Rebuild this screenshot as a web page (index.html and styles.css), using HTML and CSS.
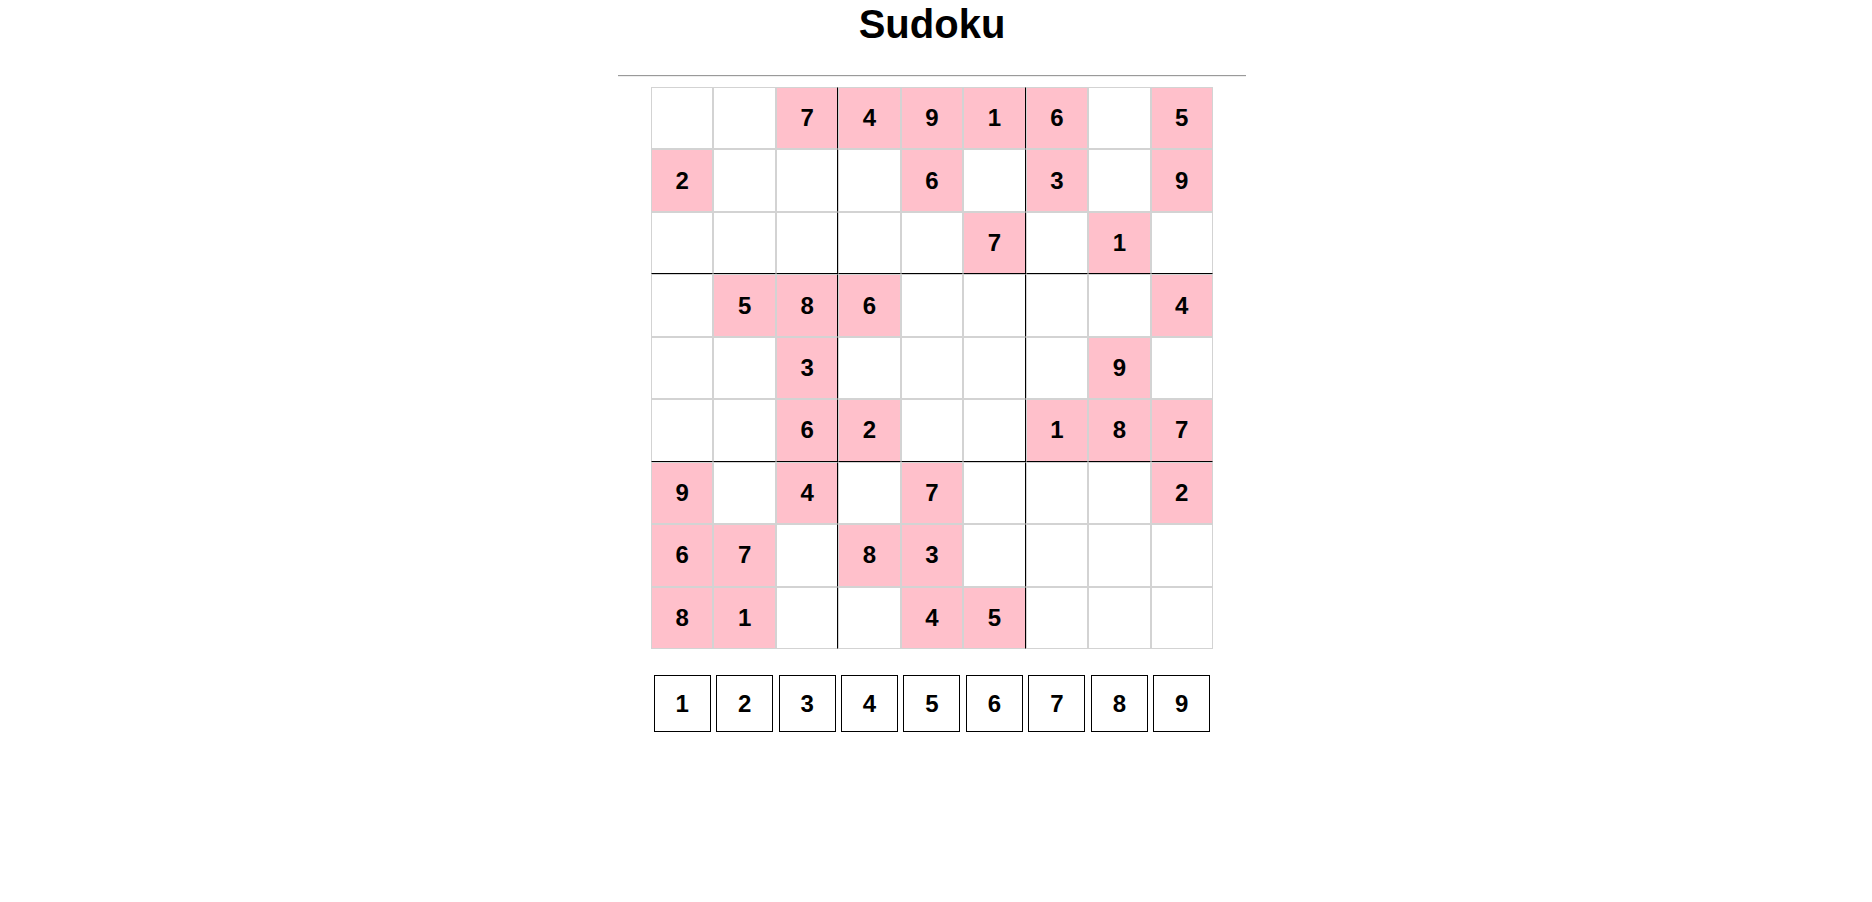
FILE: index.html
```html
<!DOCTYPE html>
<html lang="en">
<head>
<meta charset="utf-8">
<title>Sudoku</title>
<link rel="stylesheet" href="styles.css">
</head>
<body>
<main class="app">
  <h1 class="title">Sudoku</h1>
  <hr class="divider">
  <div class="board">
    <div class="cell"></div><div class="cell"></div><div class="cell given">7</div><div class="cell given">4</div><div class="cell given">9</div><div class="cell given">1</div><div class="cell given">6</div><div class="cell"></div><div class="cell given">5</div>
    <div class="cell given">2</div><div class="cell"></div><div class="cell"></div><div class="cell"></div><div class="cell given">6</div><div class="cell"></div><div class="cell given">3</div><div class="cell"></div><div class="cell given">9</div>
    <div class="cell"></div><div class="cell"></div><div class="cell"></div><div class="cell"></div><div class="cell"></div><div class="cell given">7</div><div class="cell"></div><div class="cell given">1</div><div class="cell"></div>
    <div class="cell"></div><div class="cell given">5</div><div class="cell given">8</div><div class="cell given">6</div><div class="cell"></div><div class="cell"></div><div class="cell"></div><div class="cell"></div><div class="cell given">4</div>
    <div class="cell"></div><div class="cell"></div><div class="cell given">3</div><div class="cell"></div><div class="cell"></div><div class="cell"></div><div class="cell"></div><div class="cell given">9</div><div class="cell"></div>
    <div class="cell"></div><div class="cell"></div><div class="cell given">6</div><div class="cell given">2</div><div class="cell"></div><div class="cell"></div><div class="cell given">1</div><div class="cell given">8</div><div class="cell given">7</div>
    <div class="cell given">9</div><div class="cell"></div><div class="cell given">4</div><div class="cell"></div><div class="cell given">7</div><div class="cell"></div><div class="cell"></div><div class="cell"></div><div class="cell given">2</div>
    <div class="cell given">6</div><div class="cell given">7</div><div class="cell"></div><div class="cell given">8</div><div class="cell given">3</div><div class="cell"></div><div class="cell"></div><div class="cell"></div><div class="cell"></div>
    <div class="cell given">8</div><div class="cell given">1</div><div class="cell"></div><div class="cell"></div><div class="cell given">4</div><div class="cell given">5</div><div class="cell"></div><div class="cell"></div><div class="cell"></div>
  </div>
  <div class="numbers">
    <button class="num">1</button><button class="num">2</button><button class="num">3</button><button class="num">4</button><button class="num">5</button><button class="num">6</button><button class="num">7</button><button class="num">8</button><button class="num">9</button>
  </div>
</main>
</body>
</html>
```
FILE: styles.css
```css
html, body {
  margin: 0;
  padding: 0;
  background: #fff;
}

body {
  padding-right: 8px;
  font-family: "Liberation Sans", Arial, sans-serif;
  color: #000;
}

.app {
  width: 628px;
  margin: 0 auto;
  display: flex;
  flex-direction: column;
  align-items: center;
}

.title {
  margin: 0;
  font-size: 40px;
  line-height: 48px;
  font-weight: bold;
  text-align: center;
}

.divider {
  align-self: stretch;
  margin: 27px 0 10px;
  height: 0;
  border: 0;
  border-top: 1px solid #9a9a9a;
  border-bottom: 1px solid #eeeeee;
}

.board {
  width: 562px;
  height: 562px;
  display: grid;
  grid-template-columns: repeat(9, 1fr);
  grid-template-rows: repeat(9, 1fr);
}

.cell {
  box-sizing: border-box;
  border: 1px solid #d3d3d3;
  background: #fff;
  display: flex;
  align-items: center;
  justify-content: center;
  font-size: 24px;
  font-weight: bold;
}

.cell.given {
  background: #ffc0cb;
}

.cell:nth-child(9n+3),
.cell:nth-child(9n+6) {
  border-right-color: #000;
}

.cell:nth-child(n+19):nth-child(-n+27),
.cell:nth-child(n+46):nth-child(-n+54) {
  border-bottom-color: #000;
}

.numbers {
  width: 562px;
  margin-top: 26px;
  display: grid;
  grid-template-columns: repeat(9, 1fr);
  justify-items: center;
}

.num {
  box-sizing: border-box;
  width: 57px;
  height: 57px;
  padding: 0;
  margin: 0;
  border: 1px solid #000;
  background: #fff;
  color: #000;
  font-family: "Liberation Sans", Arial, sans-serif;
  font-size: 24px;
  font-weight: bold;
}
```
